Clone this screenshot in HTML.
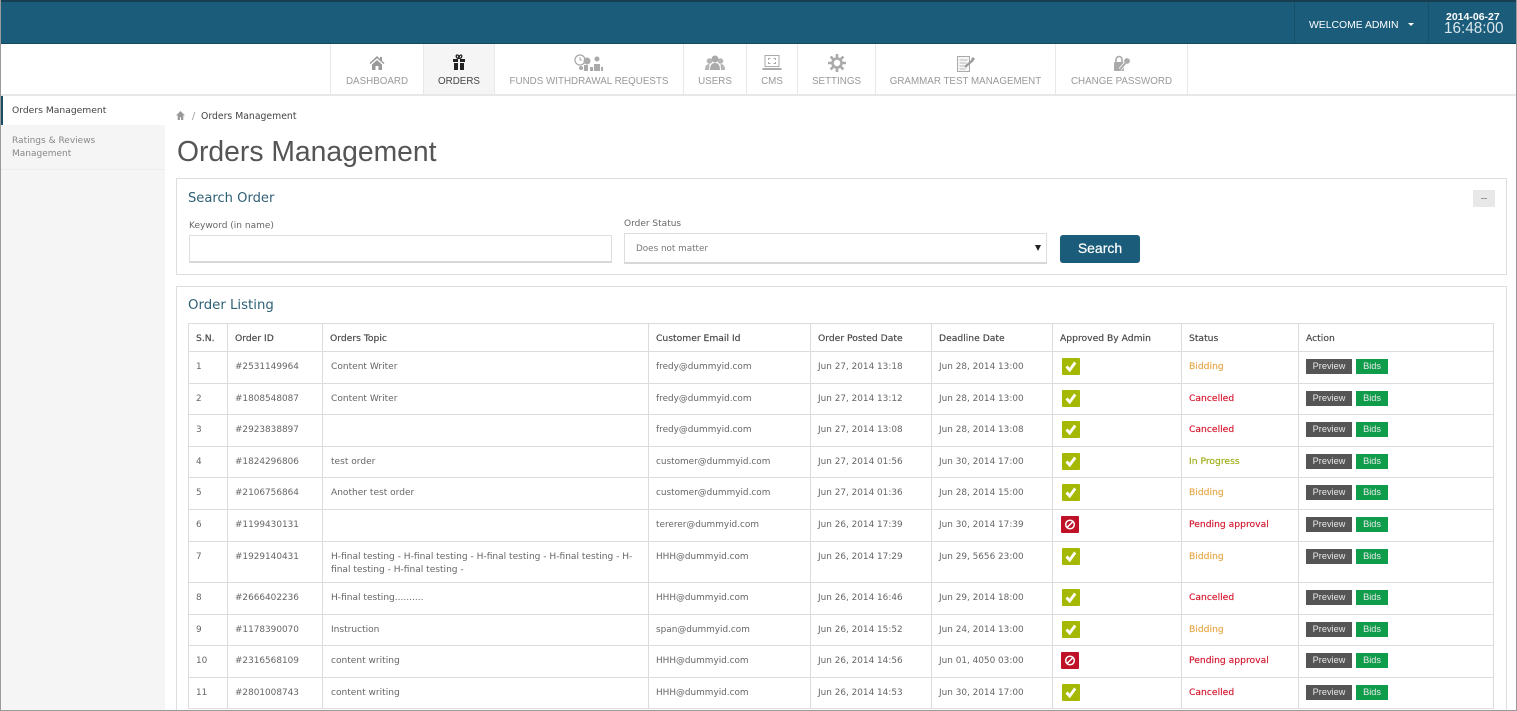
<!DOCTYPE html>
<html><head><meta charset="utf-8"><title>Orders Management</title>
<style>
*{box-sizing:border-box}
html,body{margin:0;padding:0;background:#fff;width:1517px;height:711px;overflow:hidden}
body{font-family:"DejaVu Sans","Liberation Sans",sans-serif;font-size:9px;color:#666;position:relative}
.a{position:absolute;white-space:nowrap}
#frame{position:absolute;left:0;top:0;width:1517px;height:711px;overflow:hidden}
.nav{position:absolute;top:44px;height:50px;border-right:1px solid #e8e8e8;font:9.8px "Liberation Sans",sans-serif;color:#999;text-align:center}
.nav span{position:absolute;left:0;right:0;top:30px;line-height:13px;padding-top:1px}
.nav svg{position:absolute;left:50%;top:11px;transform:translateX(-50%)}
table{position:absolute;left:188px;top:323px;width:1305px;border-collapse:collapse;table-layout:fixed;background:#fff}
td,th{border:1px solid #dcdcdc;padding:0 0 0 7px;vertical-align:top;font-size:8.9px;line-height:13px;font-weight:normal;color:#666;overflow:hidden}
td{padding-top:9px}
th{color:#444;padding-top:8px;text-align:left;font-size:9.2px;-webkit-text-stroke:.15px #444}
tr{height:31.6px}
.ok,.no{display:block;width:18px;height:17px;margin:-3px 0 0 2px;border-radius:1px;background:#a5b904}
.no{background:#bf1228;margin-left:1px}
.ok svg,.no svg{display:block}
.p,.b{position:absolute;height:15px;line-height:15px;color:#e8e8e8;text-align:center;font-size:9.200px;font-family:"Liberation Sans",sans-serif}
.p{width:46px;background:#555}
.b{width:32px;background:#0f9d4c}
td.act{position:relative}
.p{left:7px;top:7px}
.b{left:57px;top:7px}
td.bid,td.can,td.pro{font-size:9.2px;padding-top:8px;-webkit-text-stroke:.15px currentColor}
td.bid{color:#e6a84a}td.can{color:#d4142c}td.pro{color:#9aaa10}
td.topic{padding-left:8px;font-size:9.05px}
</style></head><body>
<div id="frame">
<!-- top bar -->
<div class="a" style="left:0;top:0;width:1517px;height:44px;background:#1a5c7a;border-top:2px solid #163f52;border-bottom:1px solid #134a62"></div>
<div class="a" style="left:1294px;top:2px;width:1px;height:41px;background:#175069"></div>
<div class="a" style="left:1428px;top:2px;width:1px;height:41px;background:#175069"></div>
<div class="a" style="left:1309px;top:19px;font:10.4px/14px 'Liberation Sans',sans-serif;color:#fff">WELCOME ADMIN</div>
<div class="a" style="left:1408px;top:23px;width:0;height:0;border-left:3px solid transparent;border-right:3px solid transparent;border-top:3px solid #fff"></div>
<div class="a" style="left:1446px;top:11px;font:bold 10.5px/12px 'Liberation Sans',sans-serif;color:#fff">2014-06-27</div>
<div class="a" style="left:1444px;top:20px;font:15.3px/17px 'Liberation Sans',sans-serif;color:#dbe7ec">16:48:00</div>

<!-- nav -->
<div class="a" style="left:0;top:94px;width:1517px;height:2px;background:#e8e8e8"></div>
<div class="a" style="left:330px;top:44px;width:1px;height:50px;background:#e8e8e8"></div>

<div class="nav" style="left:331px;width:93px"><svg width="16" height="16" viewBox="0 0 16 16"><path fill="#999" d="M8 1 0.5 8l1 1L8 3.2 14.500 9l1-1-2.500-2.300V2h-2v2L8 1zM3 9.500V15h3.500v-4h3v4H13V9.500L8 5 3 9.500z"/></svg><span>DASHBOARD</span></div>
<div class="nav" style="left:424px;width:71px;background:#f5f5f5;color:#444"><svg width="16" height="17" viewBox="0 0 16 17" style="top:10px"><path fill="#222" d="M2 5h5v3H2zM9 5h5v3H9zM3 9h4v7H3zM9 9h4v7H9z"/><path fill="none" stroke="#222" stroke-width="1.300" d="M8 4.500C5 4.500 4.500 1 6 1s2 2 2 3.500c0-1.500.5-3.500 2-3.500s1 3.500-2 3.500z"/></svg><span>ORDERS</span></div>
<div class="nav" style="left:495px;width:189px"><svg width="30" height="18" viewBox="0 0 30 18" style="top:10px"><circle cx="6" cy="6" r="5" fill="none" stroke="#aaa" stroke-width="1.300"/><path stroke="#aaa" fill="none" d="M6 3v3h2"/><circle cx="13" cy="7" r="3.500" fill="#aaa"/><circle cx="23" cy="5" r="2.500" fill="#aaa"/><path fill="#aaa" d="M10 17v-6h4v6zM16 17v-4h3v4zM20 17v-7h6v7zM27 17v-4h2v4z"/><circle cx="7" cy="14" r="2" fill="#aaa"/></svg><span>FUNDS WITHDRAWAL REQUESTS</span></div>
<div class="nav" style="left:684px;width:63px"><svg width="20" height="16" viewBox="0 0 20 16"><circle cx="10" cy="4" r="3.500" fill="#aaa"/><circle cx="4.500" cy="6" r="2.800" fill="#b4b4b4"/><circle cx="15.500" cy="6" r="2.800" fill="#b4b4b4"/><path fill="#aaa" d="M5 15c0-5 2-7 5-7s5 2 5 7z"/><path fill="#b4b4b4" d="M0 15c0-4 1.500-6 4.500-6L4 15zM20 15c0-4-1.500-6-4.500-6l.5 6z"/></svg><span>USERS</span></div>
<div class="nav" style="left:747px;width:51px"><svg width="19" height="16" viewBox="0 0 19 16"><rect x="2.500" y=".5" width="14" height="11" fill="none" stroke="#aaa"/><path fill="none" stroke="#aaa" d="M6 5V3.500h2M11 3.500h2V5M13 7v1.500h-2M8 8.500H6V7"/><path fill="#aaa" d="M0 13h19v2H0z"/></svg><span>CMS</span></div>
<div class="nav" style="left:798px;width:78px"><svg width="18" height="18" viewBox="0 0 18 18" style="top:10px"><path fill="none" stroke="#aaa" stroke-width="2.600" d="M9 0v4M9 14v4M0 9h4M14 9h4M2.600 2.600l2.900 2.900M12.500 12.500l2.900 2.900M15.400 2.600l-2.900 2.900M5.500 12.500l-2.900 2.900"/><circle cx="9" cy="9" r="4.500" fill="none" stroke="#aaa" stroke-width="2.600"/></svg><span>SETTINGS</span></div>
<div class="nav" style="left:876px;width:180px"><svg width="20" height="17" viewBox="0 0 20 17"><rect x="1.500" y="1.500" width="12" height="15" fill="#f6f6f6" stroke="#aaa"/><path stroke="#bbb" d="M3.500 5h8M3.500 8h7M3.500 11h5M3.500 14h6"/><path stroke="#999" stroke-width="2.200" d="M9 12l8-7"/><path fill="#999" d="M17 2l2 2-2 2-2-2z"/></svg><span>GRAMMAR TEST MANAGEMENT</span></div>
<div class="nav" style="left:1056px;width:132px"><svg width="18" height="17" viewBox="0 0 18 17"><path fill="none" stroke="#aaa" stroke-width="1.600" d="M3 7V4.500a3 3 0 0 1 6 0V7"/><rect x="1" y="7" width="10" height="9" rx="1" fill="#aaa"/><circle cx="14" cy="6" r="3.200" fill="#aaa" stroke="#fff" stroke-width=".6"/><path stroke="#fff" stroke-width="3.500" d="M12.500 8 7 14.500"/><path stroke="#aaa" stroke-width="2" d="M12.500 8 7 14.500"/></svg><span>CHANGE PASSWORD</span></div>

<!-- sidebar -->
<div class="a" style="left:1px;top:96px;width:164px;height:615px;background:#f5f5f5"></div>
<div class="a" style="left:1px;top:96px;width:164px;height:29px;background:#fff;border-left:2px solid #1a4d63"></div>
<div class="a" style="left:12px;top:104px;font-size:9.200px;line-height:13px;color:#444">Orders Management</div>
<div class="a" style="left:12px;top:134px;font-size:9px;line-height:13px;color:#888;transform:translateY(1px)">Ratings &amp; Reviews<br>Management</div>
<div class="a" style="left:1px;top:169px;width:164px;height:1px;background:#ececec"></div>

<!-- breadcrumb -->
<svg class="a" style="left:176px;top:111px" width="9" height="9" viewBox="0 0 16 16"><path fill="#999" d="M8 0 0 8h3v8h4v-5h2v5h4V8h3z"/></svg>
<div class="a" style="left:192px;top:110px;font-size:9.500px;line-height:13px;color:#999">/</div>
<div class="a" style="left:201px;top:110px;font-size:9.300px;line-height:13px;color:#444">Orders Management</div>
<div class="a" style="left:177px;top:132px;font:28.3px/38px 'Liberation Sans',sans-serif;color:#555">Orders Management</div>

<!-- search panel -->
<div class="a" style="left:176px;top:178px;width:1331px;height:97px;border:1px solid #dedede;background:#fff"></div>
<div class="a" style="left:188px;top:190px;font-size:13.100px;line-height:17px;color:#2f6076">Search Order</div>
<div class="a" style="left:1473px;top:190px;width:22px;height:17px;background:#e8e8e8"></div>
<div class="a" style="left:1481px;top:198px;width:6px;height:1px;background:#999"></div>
<div class="a" style="left:189px;top:220px;font-size:9px;line-height:13px;color:#666">Keyword (in name)</div>
<div class="a" style="left:189px;top:235px;width:423px;height:28px;border:1px solid #dedede;border-bottom:2px solid #d8d8d8;background:#fff"></div>
<div class="a" style="left:624px;top:218px;font-size:9px;line-height:13px;color:#666">Order Status</div>
<div class="a" style="left:624px;top:233px;width:423px;height:31px;border:1px solid #dedede;border-bottom:2px solid #d8d8d8;background:#fff"></div>
<div class="a" style="left:636px;top:243px;font-size:8.800px;line-height:13px;color:#777">Does not matter</div>
<div class="a" style="left:1035px;top:245px;width:0;height:0;border-left:3.500px solid transparent;border-right:3.500px solid transparent;border-top:6px solid #222"></div>
<div class="a" style="left:1060px;top:235px;width:80px;height:28px;background:#1a5c7a;border-radius:3px;color:#fff;text-align:center;font:14px/26px 'Liberation Sans',sans-serif;-webkit-text-stroke:.2px #fff">Search</div>

<!-- listing panel -->
<div class="a" style="left:176px;top:286px;width:1331px;height:440px;border:1px solid #dedede;background:#fff"></div>
<div class="a" style="left:188px;top:297px;font-size:13.300px;line-height:17px;color:#2f6076">Order Listing</div>

<table>
<colgroup><col style="width:39px"><col style="width:95px"><col style="width:326px"><col style="width:162px"><col style="width:121px"><col style="width:121px"><col style="width:129px"><col style="width:117px"><col style="width:195px"></colgroup>
<tr style="height:28px"><th>S.N.</th><th>Order ID</th><th>Orders Topic</th><th>Customer Email Id</th><th>Order Posted Date</th><th>Deadline Date</th><th>Approved By Admin</th><th>Status</th><th>Action</th></tr>
<tr><td>1</td><td>#2531149964</td><td class="topic">Content Writer</td><td>fredy@dummyid.com</td><td>Jun 27, 2014 13:18</td><td>Jun 28, 2014 13:00</td><td><i class="ok"><svg width="18" height="17" viewBox="0 0 18 17"><path fill="none" stroke="#fff" stroke-width="2.800" d="M4.500 8.500l3.200 3.500 5.500-7.500"/></svg></i></td><td class="bid">Bidding</td><td class="act"><span class="p">Preview</span><span class="b">Bids</span></td></tr>
<tr><td>2</td><td>#1808548087</td><td class="topic">Content Writer</td><td>fredy@dummyid.com</td><td>Jun 27, 2014 13:12</td><td>Jun 28, 2014 13:00</td><td><i class="ok"><svg width="18" height="17" viewBox="0 0 18 17"><path fill="none" stroke="#fff" stroke-width="2.800" d="M4.500 8.500l3.200 3.500 5.500-7.500"/></svg></i></td><td class="can">Cancelled</td><td class="act"><span class="p">Preview</span><span class="b">Bids</span></td></tr>
<tr><td>3</td><td>#2923838897</td><td class="topic"></td><td>fredy@dummyid.com</td><td>Jun 27, 2014 13:08</td><td>Jun 28, 2014 13:08</td><td><i class="ok"><svg width="18" height="17" viewBox="0 0 18 17"><path fill="none" stroke="#fff" stroke-width="2.800" d="M4.500 8.500l3.200 3.500 5.500-7.500"/></svg></i></td><td class="can">Cancelled</td><td class="act"><span class="p">Preview</span><span class="b">Bids</span></td></tr>
<tr><td>4</td><td>#1824296806</td><td class="topic">test order</td><td>customer@dummyid.com</td><td>Jun 27, 2014 01:56</td><td>Jun 30, 2014 17:00</td><td><i class="ok"><svg width="18" height="17" viewBox="0 0 18 17"><path fill="none" stroke="#fff" stroke-width="2.800" d="M4.500 8.500l3.200 3.500 5.500-7.500"/></svg></i></td><td class="pro">In Progress</td><td class="act"><span class="p">Preview</span><span class="b">Bids</span></td></tr>
<tr><td>5</td><td>#2106756864</td><td class="topic">Another test order</td><td>customer@dummyid.com</td><td>Jun 27, 2014 01:36</td><td>Jun 28, 2014 15:00</td><td><i class="ok"><svg width="18" height="17" viewBox="0 0 18 17"><path fill="none" stroke="#fff" stroke-width="2.800" d="M4.500 8.500l3.200 3.500 5.500-7.500"/></svg></i></td><td class="bid">Bidding</td><td class="act"><span class="p">Preview</span><span class="b">Bids</span></td></tr>
<tr><td>6</td><td>#1199430131</td><td class="topic"></td><td>tererer@dummyid.com</td><td>Jun 26, 2014 17:39</td><td>Jun 30, 2014 17:39</td><td><i class="no"><svg width="18" height="17" viewBox="0 0 18 17"><circle cx="9" cy="8.500" r="4.300" fill="none" stroke="#fff" stroke-width="1.500"/><path stroke="#fff" stroke-width="1.500" d="M6 11.500l6-6"/></svg></i></td><td class="can">Pending approval</td><td class="act"><span class="p">Preview</span><span class="b">Bids</span></td></tr>
<tr style="height:41.5px"><td>7</td><td>#1929140431</td><td class="topic">H-final testing - H-final testing - H-final testing - H-final testing - H-final testing - H-final testing -</td><td>HHH@dummyid.com</td><td>Jun 26, 2014 17:29</td><td>Jun 29, 5656 23:00</td><td><i class="ok"><svg width="18" height="17" viewBox="0 0 18 17"><path fill="none" stroke="#fff" stroke-width="2.800" d="M4.500 8.500l3.200 3.500 5.500-7.500"/></svg></i></td><td class="bid">Bidding</td><td class="act"><span class="p">Preview</span><span class="b">Bids</span></td></tr>
<tr><td>8</td><td>#2666402236</td><td class="topic">H-final testing..........</td><td>HHH@dummyid.com</td><td>Jun 26, 2014 16:46</td><td>Jun 29, 2014 18:00</td><td><i class="ok"><svg width="18" height="17" viewBox="0 0 18 17"><path fill="none" stroke="#fff" stroke-width="2.800" d="M4.500 8.500l3.200 3.500 5.500-7.500"/></svg></i></td><td class="can">Cancelled</td><td class="act"><span class="p">Preview</span><span class="b">Bids</span></td></tr>
<tr><td>9</td><td>#1178390070</td><td class="topic">Instruction</td><td>span@dummyid.com</td><td>Jun 26, 2014 15:52</td><td>Jun 24, 2014 13:00</td><td><i class="ok"><svg width="18" height="17" viewBox="0 0 18 17"><path fill="none" stroke="#fff" stroke-width="2.800" d="M4.500 8.500l3.200 3.500 5.500-7.500"/></svg></i></td><td class="bid">Bidding</td><td class="act"><span class="p">Preview</span><span class="b">Bids</span></td></tr>
<tr><td>10</td><td>#2316568109</td><td class="topic">content writing</td><td>HHH@dummyid.com</td><td>Jun 26, 2014 14:56</td><td>Jun 01, 4050 03:00</td><td><i class="no"><svg width="18" height="17" viewBox="0 0 18 17"><circle cx="9" cy="8.500" r="4.300" fill="none" stroke="#fff" stroke-width="1.500"/><path stroke="#fff" stroke-width="1.500" d="M6 11.500l6-6"/></svg></i></td><td class="can">Pending approval</td><td class="act"><span class="p">Preview</span><span class="b">Bids</span></td></tr>
<tr><td>11</td><td>#2801008743</td><td class="topic">content writing</td><td>HHH@dummyid.com</td><td>Jun 26, 2014 14:53</td><td>Jun 30, 2014 17:00</td><td><i class="ok"><svg width="18" height="17" viewBox="0 0 18 17"><path fill="none" stroke="#fff" stroke-width="2.800" d="M4.500 8.500l3.200 3.500 5.500-7.500"/></svg></i></td><td class="can">Cancelled</td><td class="act"><span class="p">Preview</span><span class="b">Bids</span></td></tr>
</table>

<!-- window frame -->
<div class="a" style="left:0;top:0;width:1px;height:711px;background:#9a9a9a"></div>
<div class="a" style="left:1516px;top:0;width:1px;height:711px;background:#9a9a9a"></div>
<div class="a" style="left:0;top:710px;width:1517px;height:1px;background:#9a9a9a"></div>
</div>
</body></html>
